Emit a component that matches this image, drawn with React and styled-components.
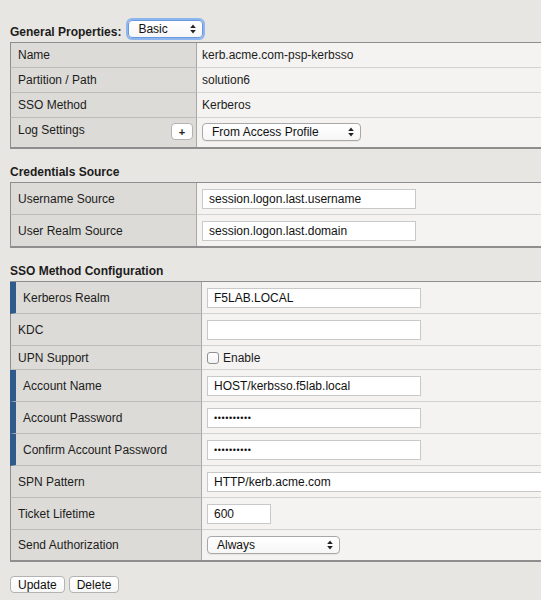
import React from "react";
import styled, { createGlobalStyle } from "styled-components";

const GlobalStyle = createGlobalStyle`
  body {
    margin: 0;
    background: #e8e6e2;
    font-family: "Liberation Sans", Arial, sans-serif;
    font-size: 12px;
    color: #1c1c1c;
    overflow: hidden;
  }
`;

function Arrows() {
  return (
    <svg width="6" height="10" viewBox="0 0 6 10">
      <path d="M3 0.5 L5.8 4 L0.2 4 Z" fill="#222" />
      <path d="M3 9.5 L5.8 6 L0.2 6 Z" fill="#222" />
    </svg>
  );
}

function Select({ value, width, focused }) {
  return (
    <SelectBox $w={width} $focused={focused}>
      <span>{value}</span>
      <Arrows />
    </SelectBox>
  );
}

function Field({ label, marked, children, pad, top }) {
  return (
    <Row>
      <Label $marked={marked} $top={top}>
        {label}
      </Label>
      <Value $pad={pad}>{children}</Value>
    </Row>
  );
}

export default function App() {
  return (
    <Page>
      <GlobalStyle />
      <HeaderRow>
        <Title>General Properties:</Title>
        <Select value="Basic" width={75} focused />
      </HeaderRow>
      <Table $label={187}>
        <Field label="Name">kerb.acme.com-psp-kerbsso</Field>
        <Field label="Partition / Path">solution6</Field>
        <Field label="SSO Method">Kerberos</Field>
        <Row>
          <Label $top>
            Log Settings
            <PlusButton>+</PlusButton>
          </Label>
          <Value $pad="5px 5px 6px">
            <Select value="From Access Profile" width={159} />
          </Value>
        </Row>
      </Table>

      <SectionTitle>Credentials Source</SectionTitle>
      <Table $label={187}>
        <Field label="Username Source" pad="6px 5px 5px">
          <Input $w={214} defaultValue="session.logon.last.username" />
        </Field>
        <Field label="User Realm Source" pad="6px 5px 5px">
          <Input $w={214} defaultValue="session.logon.last.domain" />
        </Field>
      </Table>

      <SectionTitle>SSO Method Configuration</SectionTitle>
      <Table $label={192}>
        <Field label="Kerberos Realm" marked pad="6px 5px 5px">
          <Input $w={214} defaultValue="F5LAB.LOCAL" />
        </Field>
        <Field label="KDC" pad="6px 5px 5px">
          <Input $w={214} defaultValue="" />
        </Field>
        <Field label="UPN Support" pad="5px 5px 4px">
          <CheckLabel>
            <Check type="checkbox" />
            Enable
          </CheckLabel>
        </Field>
        <Field label="Account Name" marked pad="6px 5px 5px">
          <Input $w={214} defaultValue="HOST/kerbsso.f5lab.local" />
        </Field>
        <Field label="Account Password" marked pad="6px 5px 5px">
          <Input $w={214} type="password" defaultValue="1234567890" />
        </Field>
        <Field label="Confirm Account Password" marked pad="6px 5px 5px">
          <Input $w={214} type="password" defaultValue="1234567890" />
        </Field>
        <Field label="SPN Pattern" pad="6px 5px 5px">
          <Input $w={380} defaultValue="HTTP/kerb.acme.com" />
        </Field>
        <Field label="Ticket Lifetime" pad="6px 5px 5px">
          <Input $w={64} defaultValue="600" />
        </Field>
        <Field label="Send Authorization" pad="6px 5px 6px">
          <Select value="Always" width={133} />
        </Field>
      </Table>

      <Actions>
        <Button>Update</Button>
        <Button>Delete</Button>
      </Actions>
    </Page>
  );
}

const Page = styled.div`
  padding: 20px 0 20px 10px;
`;

const HeaderRow = styled.div`
  display: flex;
  align-items: flex-end;
`;

const Title = styled.div`
  font-weight: bold;
  line-height: 14px;
  margin-bottom: 1px;
`;

const SectionTitle = styled.div`
  font-weight: bold;
  line-height: 14px;
  margin: 16px 0 3px;
`;

const SelectBox = styled.div`
  box-sizing: border-box;
  display: inline-flex;
  align-items: center;
  justify-content: space-between;
  width: ${(p) => p.$w}px;
  height: 18px;
  padding: 0 6px 0 9px;
  margin: ${(p) => (p.$focused ? "0 0 2px 7px" : "0")};
  border: 1px solid ${(p) => (p.$focused ? "#6a98dc" : "#a8a8a8")};
  border-radius: 4px;
  background: linear-gradient(#ffffff, #f6f6f6);
  box-shadow: ${(p) =>
    p.$focused ? "0 0 0 2px #8db6ee" : "0 1px 0 rgba(0,0,0,0.05)"};
  line-height: 16px;
  color: #111;
`;

const Table = styled.div`
  --label: ${(p) => p.$label}px;
  margin-top: 2px;
  border-top: 1px solid #8e8e8e;
  border-bottom: 2px solid #8e8e8e;
`;

const Row = styled.div`
  display: grid;
  grid-template-columns: var(--label) minmax(0, 1fr);

  &:not(:last-child) > * {
    border-bottom: 1px solid #d3d2cf;
  }
  &:not(:last-child) > *:first-child {
    border-bottom-color: #bdbcb9;
  }
`;

const Label = styled.div`
  box-sizing: border-box;
  display: flex;
  justify-content: space-between;
  align-items: ${(p) => (p.$top ? "flex-start" : "center")};
  padding: ${(p) => (p.$top ? "5px 3px 0 7px" : "0 3px 0 7px")};
  line-height: 14px;
  background: #dcdbd7;
  border-left: ${(p) => (p.$marked ? "6px solid #2e5b8c" : "1px solid #8e8e8e")};
  border-right: 1px solid #a9a8a5;
`;

const Value = styled.div`
  display: flex;
  align-items: center;
  overflow: hidden;
  padding: ${(p) => p.$pad || "5px 5px"};
  line-height: 14px;
  background: #f4f3f1;
`;

const Input = styled.input`
  box-sizing: border-box;
  flex: none;
  width: ${(p) => p.$w}px;
  height: 20px;
  margin: 0;
  padding: 0 6px;
  border: 1px solid #c9c9c9;
  border-radius: 0;
  background: #fff;
  font-family: "Liberation Sans", Arial, sans-serif;
  font-size: ${(p) => (p.type === "password" ? "9px" : "12px")};
  letter-spacing: ${(p) => (p.type === "password" ? "0.6px" : "normal")};
  color: #111;
  outline: none;
`;

const CheckLabel = styled.label`
  display: flex;
  align-items: center;
  gap: 4px;
`;

const Check = styled.input`
  appearance: none;
  box-sizing: border-box;
  width: 12px;
  height: 12px;
  margin: 0;
  border: 1px solid #8f8f8f;
  border-radius: 3px;
  background: linear-gradient(#ffffff, #f2f2f2);
`;

const PlusButton = styled.button`
  box-sizing: border-box;
  width: 22px;
  height: 17px;
  padding: 0;
  border: 1px solid #b3b3b3;
  border-radius: 4px;
  background: #fff;
  font-family: "Liberation Sans", Arial, sans-serif;
  font-size: 11px;
  font-weight: bold;
  line-height: 14px;
  color: #222;
`;

const Actions = styled.div`
  display: flex;
  gap: 4px;
  margin-top: 14px;
`;

const Button = styled.button`
  box-sizing: border-box;
  height: 17px;
  padding: 0 7px;
  border: 1px solid #b3b3b3;
  border-radius: 4px;
  background: linear-gradient(#ffffff, #f7f7f7);
  font-family: "Liberation Sans", Arial, sans-serif;
  font-size: 12px;
  line-height: 14px;
  color: #111;
`;
